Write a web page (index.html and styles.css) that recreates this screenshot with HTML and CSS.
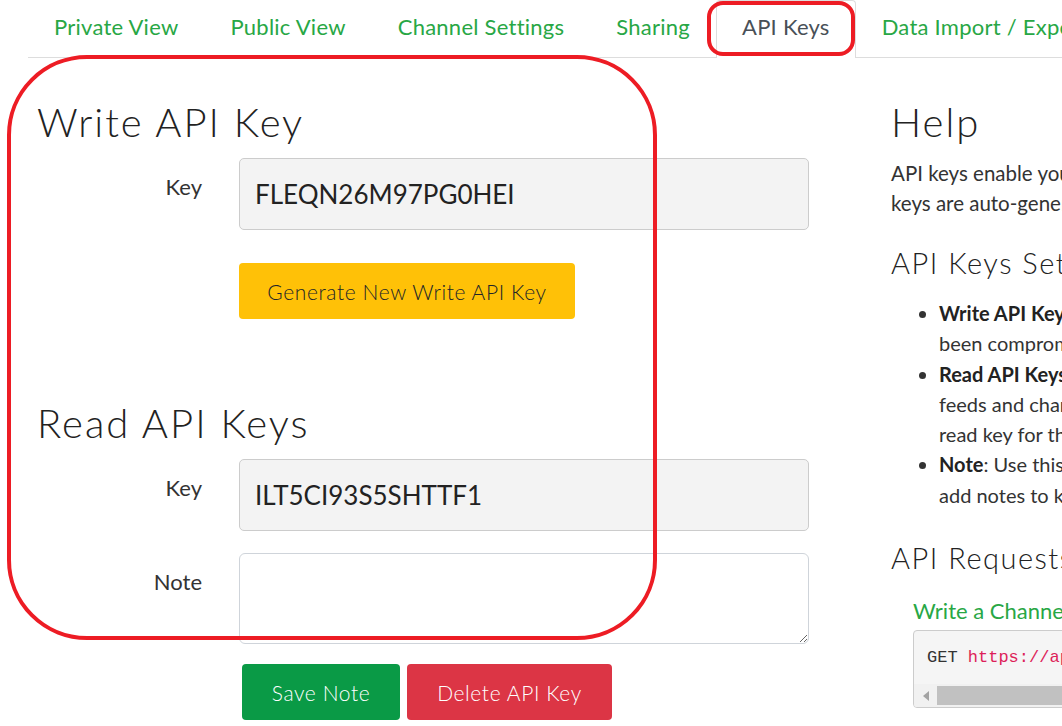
FILE: index.html
```html
<!DOCTYPE html>
<html lang="en">
<head>
<meta charset="utf-8">
<title>API Keys</title>
<link rel="stylesheet" href="styles.css">
</head>
<body>
<div class="page">
  <nav class="tabs">
    <a class="tab" href="#">Private View</a>
    <a class="tab" href="#">Public View</a>
    <a class="tab" href="#">Channel Settings</a>
    <a class="tab" href="#">Sharing</a>
    <a class="tab active" href="#">API Keys</a>
    <a class="tab" href="#">Data Import / Export</a>
  </nav>

  <main class="content">
    <section class="keys">
      <h2 class="heading">Write API Key</h2>
      <div class="form-row">
        <label class="label">Key</label>
        <input class="field" type="text" value="FLEQN26M97PG0HEI" readonly>
      </div>
      <div class="form-row">
        <span></span>
        <div><button class="btn btn-warning">Generate New Write API Key</button></div>
      </div>

      <h2 class="heading read-heading">Read API Keys</h2>
      <div class="form-row">
        <label class="label">Key</label>
        <input class="field" type="text" value="ILT5CI93S5SHTTF1" readonly>
      </div>
      <div class="form-row note-row">
        <label class="label">Note</label>
        <textarea class="note"></textarea>
      </div>
      <div class="form-row">
        <span></span>
        <div class="actions">
          <button class="btn btn-success">Save Note</button>
          <button class="btn btn-danger">Delete API Key</button>
        </div>
      </div>
    </section>

    <aside class="help">
      <h2 class="heading">Help</h2>
      <p class="help-text">API keys enable you to write data to a channel or read data from a private channel. API<br>keys are auto-generated when you create a new channel.</p>
      <h3 class="subheading">API Keys Settings</h3>
      <ul class="help-list">
        <li><b>Write API Key</b>: Use this key to write data to a channel. If you feel your key has<br>been compromised, click <b>Generate New Write API Key</b>.</li>
        <li><b>Read API Keys</b>: Use this key to allow other people to view your private channel<br>feeds and charts. Click <b>Generate New Read API Key</b> to generate an additional<br>read key for the channel.</li>
        <li><b>Note</b>: Use this field to enter information about channel read keys. For example,<br>add notes to keep track of users with access to your channel.</li>
      </ul>
      <h3 class="subheading second">API Requests</h3>
      <div class="request">
        <a class="request-title" href="#">Write a Channel Feed</a>
        <div class="code-box">
          <pre class="code"><span class="verb">GET</span> <span class="url">https://api.thingspeak.com/update?api_key=FLEQN26M97PG0HEI&amp;field1=0</span></pre>
          <div class="scrollbar">
            <span class="arrow"></span>
            <span class="thumb"></span>
          </div>
        </div>
      </div>
    </aside>
  </main>

  <div class="mark mark-tab"></div>
  <div class="mark mark-panel"></div>
</div>
</body>
</html>
```

FILE: styles.css
```css
html, body {
  margin: 0;
  padding: 0;
  background: #fff;
  overflow: hidden;
}

body {
  font-family: "Lato", "Open Sans", sans-serif;
  color: #333;
}

.page {
  position: relative;
  width: 1062px;
  height: 726px;
  overflow: hidden;
}

/* Tabs */
.tabs {
  display: flex;
  margin-left: 28px;
  height: 57px;
  border-bottom: 1px solid #ddd;
  white-space: nowrap;
}

.tab {
  display: block;
  padding: 0 25px;
  border: 1px solid transparent;
  border-bottom: none;
  line-height: 52px;
  font-size: 22px;
  letter-spacing: 0.25px;
  color: #28a745;
  text-decoration: none;
}

.tab.active {
  color: #495057;
  border-color: #ddd;
  background: #fff;
  height: 57px;
  border-radius: 4px 4px 0 0;
}

/* Main */
.content {
  display: flex;
  align-items: flex-start;
}

.keys {
  flex: 0 0 auto;
  width: 772px;
  margin-left: 37px;
}

.heading {
  margin: 40px 0 12px;
  font-family: "Lato", sans-serif;
  font-weight: 300;
  font-size: 40px;
  line-height: 48px;
  letter-spacing: 2px;
  color: #222;
}

.read-heading {
  margin-top: 80px;
}

.form-row {
  display: grid;
  grid-template-columns: 165px 570px;
  column-gap: 37px;
}

.label {
  text-align: right;
  font-size: 22px;
  line-height: 30px;
  padding-top: 14px;
  color: #333;
}

.field {
  box-sizing: border-box;
  width: 570px;
  height: 72px;
  margin: 0;
  padding: 0 15px;
  border: 1px solid #ccc;
  border-radius: 5px;
  background: #f3f3f3;
  font-family: "Lato", sans-serif;
  font-size: 26px;
  color: #222;
  outline: none;
}

.btn {
  border: none;
  border-radius: 4px;
  height: 56px;
  padding: 0;
  font-family: "Lato", sans-serif;
  font-weight: 300;
  font-size: 21px;
  letter-spacing: 0.6px;
  cursor: pointer;
}

.btn-warning {
  margin-top: 33px;
  background: #ffc107;
  color: #212529;
  width: 336px;
}

.note-row {
  margin-top: 22px;
}

.note {
  box-sizing: border-box;
  width: 570px;
  height: 91px;
  margin: 0;
  border: 1px solid #cfd4da;
  border-radius: 6px;
  background: #fff;
  resize: both;
  font-family: "Lato", sans-serif;
  font-size: 20px;
}

.actions {
  display: flex;
  gap: 7px;
  margin: 20px 0 0 3px;
}

.btn-success {
  background: #0a9a46;
  color: #fff;
  width: 158px;
}

.btn-danger {
  background: #dc3545;
  color: #fff;
  width: 205px;
}

/* Help column */
.help {
  flex: 0 0 auto;
  margin-left: 82px;
  width: 600px;
  white-space: nowrap;
}

.help-text {
  margin: 12px 0 0;
  font-size: 20.5px;
  line-height: 30px;
  color: #333;
}

.subheading {
  margin: 27px 0 17px;
  font-family: "Lato", sans-serif;
  font-weight: 300;
  font-size: 29px;
  line-height: 36px;
  letter-spacing: 1.5px;
  color: #222;
}

.subheading.second {
  margin-top: 30px;
  margin-bottom: 20px;
}

.help-list {
  margin: 0;
  padding-left: 48px;
  font-size: 20px;
  line-height: 30.3px;
  color: #333;
}

.help-list b {
  font-weight: 700;
  color: #222;
}

.request {
  padding-left: 22px;
}

.request-title {
  display: block;
  font-size: 22px;
  line-height: 30px;
  color: #28a745;
  text-decoration: none;
}

.code-box {
  margin-top: 4px;
  width: 560px;
  border: 1px solid #ccc;
  border-radius: 4px;
  background: #f5f5f5;
  overflow: hidden;
}

.code {
  margin: 0;
  padding: 13px 13px 12px;
  font-family: "Liberation Mono", monospace;
  font-size: 17px;
  line-height: 28px;
  color: #333;
}

.url {
  color: #dd1f5a;
}

.scrollbar {
  display: flex;
  align-items: center;
  height: 23px;
  background: #f1f1f1;
}

.arrow {
  width: 0;
  height: 0;
  margin: 0 8px 0 9px;
  border-top: 5px solid transparent;
  border-bottom: 5px solid transparent;
  border-right: 6px solid #a3a3a3;
}

.thumb {
  flex: 1;
  height: 19px;
  background: #c1c1c1;
}

/* Red annotation marks */
.mark {
  position: absolute;
  box-sizing: border-box;
  border: 4px solid #ed1c24;
  pointer-events: none;
}

.mark-tab {
  left: 707px;
  top: 1px;
  width: 148px;
  height: 55px;
  border-radius: 16px;
}

.mark-panel {
  left: 7px;
  top: 55px;
  width: 650px;
  height: 585px;
  border-radius: 80px;
}
```
